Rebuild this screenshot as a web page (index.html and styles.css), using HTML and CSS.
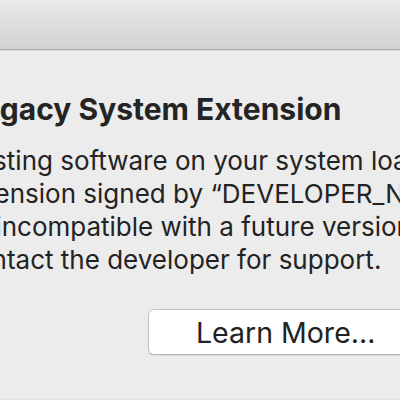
FILE: index.html
```html
<!DOCTYPE html>
<html lang="en">
<head>
<meta charset="utf-8">
<title>Legacy System Extension</title>
<link rel="stylesheet" href="styles.css">
</head>
<body>
<div class="window">
  <div class="titlebar"></div>
  <div class="content">
    <h1 class="title">Legacy System Extension</h1>
    <p class="message">Existing software on your system loads a system<br>extension signed by “DEVELOPER_NAME” which will<br>be incompatible with a future version of macOS.<br>Contact the developer for support.</p>
    <div class="actions">
      <button class="btn">Learn More...</button>
    </div>
  </div>
  <div class="bottom"></div>
</div>
</body>
</html>
```
FILE: styles.css
```css
html, body {
  margin: 0;
  padding: 0;
  width: 400px;
  height: 400px;
  overflow: hidden;
  background: #ececec;
}
.window {
  display: flex;
  flex-direction: column;
  width: 400px;
  height: 400px;
  font-family: Inter, "Liberation Sans", sans-serif;
  color: #232323;
}
.titlebar {
  height: 49px;
  background: linear-gradient(#e9e9e9, #d3d3d3);
  border-bottom: 1px solid #a9a9a9;
  box-shadow: 0 1px 0 #dcdcdc;
  flex: none;
}
.content {
  flex: 1;
  margin-left: -35px;
  padding-top: 41px;
  white-space: nowrap;
}
.title {
  margin: 0;
  font-size: 30px;
  font-weight: 700;
  line-height: 37px;
  color: #242424;
}
.message {
  margin: 16px 0 0 -8px;
  font-size: 26px;
  font-weight: 400;
  line-height: 33px;
}
.actions {
  margin-top: 33px;
  padding-left: 183px;
}
.btn {
  display: block;
  width: 300px;
  height: 46px;
  background: #ffffff;
  border: 1px solid #c4c4c4;
  border-bottom-color: #b5b5b5;
  border-radius: 6px;
  font-family: Inter, "Liberation Sans", sans-serif;
  font-size: 28.5px;
  color: #222;
  text-align: left;
  padding: 0 0 0 47px;
  box-shadow: 0 1px 1px rgba(0,0,0,0.08);
}
.bottom {
  height: 2px;
  flex: none;
  background: #e2e2e2;
  border-top: 1px solid #f2f2f2;
}
```
